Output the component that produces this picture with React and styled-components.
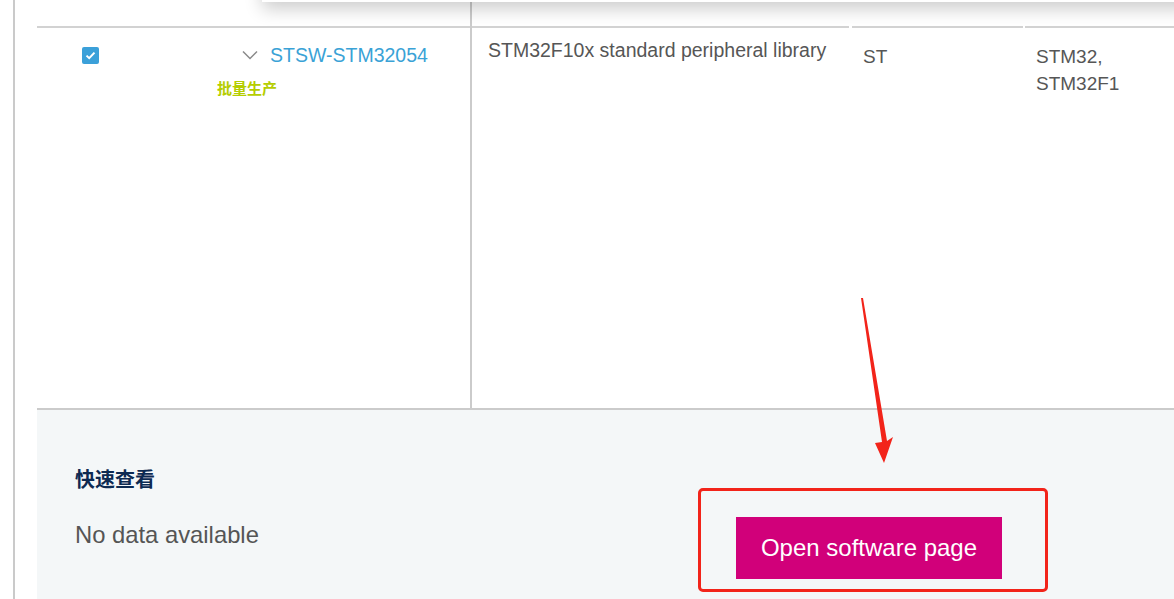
import React from 'react';
import styled, { createGlobalStyle } from 'styled-components';

const GlobalStyle = createGlobalStyle`
    html, body {
        margin: 0;
        padding: 0;
        background: #fff;
    }
    body {
        font-family: "Liberation Sans", Arial, "Noto Sans CJK SC", sans-serif;
    }
`;

const Page = styled.div`
    position: relative;
    width: 1174px;
    height: 599px;
    overflow: hidden;
    padding-left: 13px;
    box-sizing: border-box;
`;

const Frame = styled.div`
    height: 100%;
    border-left: 2px solid #cacaca;
    padding-left: 22px;
    display: flex;
    flex-direction: column;
`;

/* floating sticky header that casts the shadow over the top of the table */
const HeaderShadow = styled.div`
    position: absolute;
    top: -30px;
    left: 262px;
    right: -20px;
    height: 32px;
    background: #fff;
    box-shadow: 0 7px 18px rgba(0, 0, 0, 0.2);
`;

const Table = styled.div`
    display: flex;
    height: 410px;
    border-bottom: 2px solid #cbcbcb;
    box-sizing: border-box;
`;

const MainCol = styled.div`
    width: 433px;
    flex-shrink: 0;
    border-right: 2px solid #cbcbcb;
    display: flex;
    flex-direction: column;
`;

const HeadCell = styled.div`
    height: 26px;
    border-bottom: 2px solid #d2d2d2;
    flex-shrink: 0;
    margin-right: ${(p) => p.$gap || 0}px;
`;

const MainBody = styled.div`
    display: flex;
    padding: 19px 0 0 45px;
`;

const Checkbox = styled.span`
    width: 17px;
    height: 17px;
    border-radius: 2px;
    background: #3ba0d9;
    display: flex;
    align-items: center;
    justify-content: center;
    flex-shrink: 0;
`;

const Product = styled.div`
    display: flex;
    flex-direction: column;
    margin-left: 101px;
`;

const ProductLine = styled.div`
    display: flex;
    align-items: center;
    gap: 12px;
    margin-top: -4px;
    margin-left: 42px;
`;

const PartLink = styled.a`
    font-size: 19.5px;
    line-height: 24px;
    color: #3aa2d6;
    text-decoration: none;
`;

const Status = styled.span`
    margin-top: 12px;
    margin-left: 17px;
    font-size: 15px;
    font-weight: bold;
    line-height: 18px;
    color: #b5cd00;
    font-family: "Noto Sans CJK SC", sans-serif;
`;

const DataCol = styled.div`
    width: ${(p) => p.$w}px;
    flex-shrink: 0;
    display: flex;
    flex-direction: column;
`;

const DataText = styled.div`
    padding: ${(p) => p.$top}px 0 0 ${(p) => p.$left}px;
    font-size: ${(p) => p.$size || 19}px;
    line-height: ${(p) => p.$lh || 24}px;
    color: #565656;
    white-space: nowrap;
`;

const QuickView = styled.div`
    flex: 1;
    background: #f4f7f8;
    display: flex;
    padding: 56px 0 0 38px;
`;

const QuickInfo = styled.div`
    width: 661px;
    flex-shrink: 0;
    display: flex;
    flex-direction: column;
`;

const QuickTitle = styled.h3`
    margin: 0;
    font-size: 20px;
    line-height: 26px;
    font-weight: bold;
    color: #0d2a52;
    font-family: "Noto Sans CJK SC", sans-serif;
`;

const NoData = styled.p`
    margin: 29px 0 0;
    font-size: 23.8px;
    line-height: 28px;
    color: #555;
`;

const OpenButton = styled.button`
    margin-top: 51px;
    width: 266px;
    height: 62px;
    padding: 0;
    border: none;
    background: #d1007a;
    color: #fff;
    font-family: "Liberation Sans", Arial, sans-serif;
    font-size: 24px;
    cursor: pointer;
`;

const Highlight = styled.div`
    position: absolute;
    left: 698px;
    top: 488px;
    width: 350px;
    height: 104px;
    box-sizing: border-box;
    border: 3px solid #f2241a;
    border-radius: 5px;
`;

const Arrow = styled.svg`
    position: absolute;
    left: 0;
    top: 0;
    pointer-events: none;
`;

const App = () => {
    return (
        <>
            <GlobalStyle />
            <Page>
                <Frame>
                    <Table>
                        <MainCol>
                            <HeadCell />
                            <MainBody>
                                <Checkbox>
                                    <svg width="11" height="9" viewBox="0 0 11 9">
                                        <path d="M1.5 4.6 L4.2 7.2 L9.5 1.6" fill="none" stroke="#fff" strokeWidth="2" />
                                    </svg>
                                </Checkbox>
                                <Product>
                                    <ProductLine>
                                        <svg width="16" height="10" viewBox="0 0 16 10">
                                            <path d="M1 1.5 L8 8.5 L15 1.5" fill="none" stroke="#8a8a8a" strokeWidth="1.5" />
                                        </svg>
                                        <PartLink href="#">STSW-STM32054</PartLink>
                                    </ProductLine>
                                    <Status>批量生产</Status>
                                </Product>
                            </MainBody>
                        </MainCol>
                        <DataCol $w={380}>
                            <HeadCell $gap={3} />
                            <DataText $top={10} $left={16} $size={19.5}>STM32F10x standard peripheral library</DataText>
                        </DataCol>
                        <DataCol $w={173}>
                            <HeadCell $gap={2} />
                            <DataText $top={17} $left={11}>ST</DataText>
                        </DataCol>
                        <DataCol $w={200}>
                            <HeadCell />
                            <DataText $top={15} $left={11} $lh={27}>
                                STM32,
                                <br />
                                STM32F1
                            </DataText>
                        </DataCol>
                    </Table>
                    <QuickView>
                        <QuickInfo>
                            <QuickTitle>快速查看</QuickTitle>
                            <NoData>No data available</NoData>
                        </QuickInfo>
                        <OpenButton>Open software page</OpenButton>
                    </QuickView>
                </Frame>
                <HeaderShadow />
                <Highlight />
                <Arrow width="1174" height="599" viewBox="0 0 1174 599">
                    <polygon points="861,298 863,298 887,441 893,437 884,463 875,443 882,442" fill="#f2241a" />
                </Arrow>
            </Page>
        </>
    );
};

export default App;
